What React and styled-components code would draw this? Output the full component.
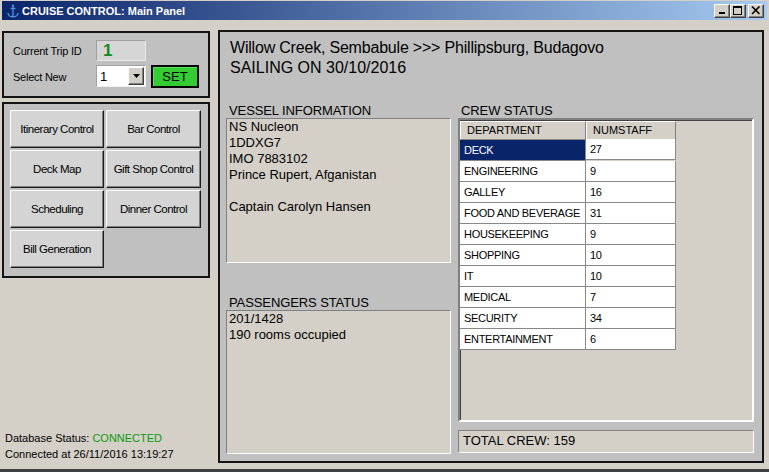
import styled, { createGlobalStyle } from 'styled-components';

const GlobalStyle = createGlobalStyle`
  html, body {
    margin: 0;
    padding: 0;
    background: #d4d0c8;
  }
  body {
    font-family: "Liberation Sans", Arial, sans-serif;
    color: #000;
  }
  * {
    box-sizing: border-box;
  }
`;

const crew = [
  ['DECK', 27],
  ['ENGINEERING', 9],
  ['GALLEY', 16],
  ['FOOD AND BEVERAGE', 31],
  ['HOUSEKEEPING', 9],
  ['SHOPPING', 10],
  ['IT', 10],
  ['MEDICAL', 7],
  ['SECURITY', 34],
  ['ENTERTAINMENT', 6],
];

const menu = [
  'Itinerary Control',
  'Bar Control',
  'Deck Map',
  'Gift Shop Control',
  'Scheduling',
  'Dinner Control',
  'Bill Generation',
];

const Anchor = () => (
  <svg width='12' height='14' viewBox='0 0 12 14'>
    <g stroke='#4f8fd8' strokeWidth='1.4' fill='none'>
      <line x1='6' y1='2' x2='6' y2='13' />
      <line x1='3.5' y1='4.5' x2='8.5' y2='4.5' />
      <path d='M1 9 Q1.5 12.8 6 12.8 Q10.5 12.8 11 9' />
    </g>
    <circle cx='6' cy='1.6' r='1.2' fill='#4f8fd8' />
  </svg>
);

const App = () => {
  return (
    <Window>
      <GlobalStyle />
      <TitleBar>
        <TitleIcon>
          <Anchor />
        </TitleIcon>
        <TitleText>CRUISE CONTROL: Main Panel</TitleText>
        <TitleButtons>
          <TitleButton aria-label='minimize'>
            <svg width='10' height='9' viewBox='0 0 10 9'>
              <rect x='2' y='6' width='6' height='2' fill='#000' />
            </svg>
          </TitleButton>
          <TitleButton aria-label='maximize'>
            <svg width='10' height='9' viewBox='0 0 10 9'>
              <rect x='0.5' y='0.5' width='8' height='8' fill='none' stroke='#000' />
              <rect x='0' y='0' width='9' height='2' fill='#000' />
            </svg>
          </TitleButton>
          <TitleButton aria-label='close' $gap={2}>
            <svg width='10' height='9' viewBox='0 0 10 9'>
              <path d='M1 0.5 L8.5 8 M8.5 0.5 L1 8' stroke='#000' strokeWidth='1.6' />
            </svg>
          </TitleButton>
        </TitleButtons>
      </TitleBar>

      <Body>
        <LeftColumn>
          <TripPanel>
            <FieldLabel>Current Trip ID</FieldLabel>
            <TripId>1</TripId>
            <span />
            <FieldLabel>Select New</FieldLabel>
            <Combo>
              <ComboValue>1</ComboValue>
              <ComboArrow>
                <svg width='7' height='4' viewBox='0 0 7 4'>
                  <path d='M0 0 H7 L3.5 4 Z' fill='#000' />
                </svg>
              </ComboArrow>
            </Combo>
            <SetButton>SET</SetButton>
          </TripPanel>

          <MenuPanel>
            {menu.map((item) => (
              <MenuButton key={item}>{item}</MenuButton>
            ))}
          </MenuPanel>

          <StatusBlock>
            <div>
              Database Status:<Connected>CONNECTED</Connected>
            </div>
            <div>Connected at 26/11/2016 13:19:27</div>
          </StatusBlock>
        </LeftColumn>

        <MainPanel>
          <Heading>
            <Route>Willow Creek, Sembabule &gt;&gt;&gt; Phillipsburg, Budagovo</Route>
            <div>SAILING ON 30/10/2016</div>
          </Heading>
          <Columns>
            <Column>
              <SectionLabel>VESSEL INFORMATION</SectionLabel>
              <InfoBox>
                <div>NS Nucleon</div>
                <div>1DDXG7</div>
                <div>IMO 7883102</div>
                <div>Prince Rupert, Afganistan</div>
                <div>&nbsp;</div>
                <div>Captain Carolyn Hansen</div>
              </InfoBox>
              <SectionLabel $space={32}>PASSENGERS STATUS</SectionLabel>
              <InfoBox>
                <div>201/1428</div>
                <div>190 rooms occupied</div>
              </InfoBox>
            </Column>
            <Column>
              <SectionLabel>CREW STATUS</SectionLabel>
              <GridBox>
                <GridRow>
                  <HeaderCell>DEPARTMENT</HeaderCell>
                  <HeaderCell>NUMSTAFF</HeaderCell>
                </GridRow>
                {crew.map(([dept, num], i) => (
                  <GridRow key={dept}>
                    <Cell $selected={i === 0}>{dept}</Cell>
                    <Cell>{num}</Cell>
                  </GridRow>
                ))}
              </GridBox>
              <TotalBox>TOTAL CREW: 159</TotalBox>
            </Column>
          </Columns>
        </MainPanel>
      </Body>
    </Window>
  );
};

const Window = styled.div`
  width: 769px;
  height: 472px;
  background: #d4d0c8;
  padding: 1px 2px 0 2px;
  display: flex;
  flex-direction: column;
  overflow: hidden;
  border-bottom: 3px solid;
  border-image: linear-gradient(#d4d0c8 33%, #808080 33%, #808080 66%, #404040 66%) 3;
`;

const TitleBar = styled.div`
  height: 19px;
  display: flex;
  align-items: center;
  padding: 0 3px 0 5px;
  background: linear-gradient(to right, #0a246a, #a6caf0);
  flex-shrink: 0;
`;

const TitleIcon = styled.div`
  width: 15px;
  display: flex;
  align-items: center;
  margin-top: 1px;
`;

const TitleText = styled.div`
  color: #fff;
  font-weight: bold;
  font-size: 11px;
  flex: 1;
`;

const TitleButtons = styled.div`
  display: flex;
  align-items: center;
`;

const TitleButton = styled.button`
  width: 16px;
  height: 14px;
  padding: 0;
  margin: 0 0 0 ${(p) => p.$gap || 0}px;
  background: #d4d0c8;
  border: 1px solid;
  border-color: #fff #404040 #404040 #fff;
  box-shadow: inset -1px -1px #808080;
  display: flex;
  align-items: center;
  justify-content: center;
`;

const Body = styled.div`
  display: flex;
  align-items: flex-start;
  padding-top: 10px;
`;

const LeftColumn = styled.div`
  width: 208px;
  height: 433px;
  display: flex;
  flex-direction: column;
  padding-bottom: 1px;
`;

const Panel = styled.div`
  background: #c0c0c0;
  border: 2px solid #141414;
`;

const TripPanel = styled(Panel)`
  margin-top: 1px;
  height: 67px;
  padding: 7px 8px 0 9px;
  display: grid;
  grid-template-columns: 78px 50px 48px;
  grid-template-rows: 21px 23px;
  column-gap: 5px;
  row-gap: 4px;
  align-items: center;
`;

const FieldLabel = styled.div`
  font-size: 11px;
  letter-spacing: -0.25px;
  white-space: nowrap;
`;

const TripId = styled.div`
  height: 21px;
  background: #d6d6d6;
  border: 1px solid;
  border-color: #a0a0a0 #e8e8e8 #e8e8e8 #a0a0a0;
  color: #138a1c;
  font-size: 17px;
  font-weight: bold;
  line-height: 19px;
  padding-left: 6px;
`;

const Combo = styled.div`
  height: 22px;
  align-self: start;
  background: #fff;
  border: 1px solid;
  border-color: #a0a0a0 #f0f0f0 #f0f0f0 #a0a0a0;
  display: flex;
  align-items: center;
  padding: 1px;
`;

const ComboValue = styled.div`
  flex: 1;
  font-size: 13px;
  padding-left: 2px;
`;

const ComboArrow = styled.div`
  width: 16px;
  height: 18px;
  background: #d4d0c8;
  border: 1px solid;
  border-color: #fff #404040 #404040 #fff;
  box-shadow: inset -1px -1px #808080;
  display: flex;
  align-items: center;
  justify-content: center;
`;

const SetButton = styled.button`
  height: 23px;
  padding: 0;
  background: #33cc33;
  border: 2px solid #000;
  box-shadow: inset 1px 1px #5fe05f;
  font-family: "Liberation Sans", Arial, sans-serif;
  font-size: 13px;
  color: #000;
`;

const MenuPanel = styled(Panel)`
  margin-top: 4px;
  height: 176px;
  padding: 6px;
  display: grid;
  grid-template-columns: 94px 95px;
  grid-auto-rows: 38px;
  column-gap: 2px;
  row-gap: 2px;
  align-content: start;
`;

const MenuButton = styled.button`
  background: #d4d4d4;
  border: 1px solid;
  border-color: #fff #1a1a1a #1a1a1a #fff;
  box-shadow: inset -1px -1px #808080;
  font-family: "Liberation Sans", Arial, sans-serif;
  font-size: 11.5px;
  letter-spacing: -0.5px;
  color: #000;
  padding: 0;
`;

const StatusBlock = styled.div`
  margin-top: auto;
  padding-left: 3px;
  font-size: 11px;
  line-height: 16px;
  white-space: nowrap;
`;

const Connected = styled.span`
  color: #0a9a0a;
  margin-left: 3px;
`;

const MainPanel = styled(Panel)`
  margin-left: 8px;
  width: 546px;
  height: 433px;
  padding: 6px 8px 7px 6px;
  display: flex;
  flex-direction: column;
`;

const Heading = styled.div`
  font-size: 16px;
  line-height: 20px;
  padding-left: 4px;
  margin-bottom: 25px;
`;

const Route = styled.div`
  letter-spacing: -0.2px;
`;

const Columns = styled.div`
  flex: 1;
  display: grid;
  grid-template-columns: 225px 296px;
  column-gap: 7px;
`;

const Column = styled.div`
  display: flex;
  flex-direction: column;
`;

const SectionLabel = styled.div`
  font-size: 13px;
  line-height: 15px;
  height: 15px;
  padding-left: 3px;
  margin-top: ${(p) => p.$space || 0}px;
  letter-spacing: -0.1px;
`;

const InfoBox = styled.div`
  flex: 1;
  background: #d4d0c8;
  border: 1px solid;
  border-color: #808080 #fff #fff #808080;
  font-size: 13px;
  line-height: 16px;
  padding-left: 2px;
`;

const GridBox = styled.div`
  flex: 1;
  background: #d4d0c8;
  border: 2px solid;
  border-color: #808080 #fff #fff #808080;
  box-shadow: inset 1px 1px #404040;
`;

const GridRow = styled.div`
  display: grid;
  grid-template-columns: 126px 90px;
`;

const HeaderCell = styled.div`
  height: 18px;
  font-size: 11px;
  line-height: 17px;
  padding-left: 6px;
  background: #d4d0c8;
  border-top: 1px solid #fff;
  border-left: 1px solid #fff;
  border-right: 1px solid #808080;
  margin-top: 1px;
`;

const Cell = styled.div`
  font-size: 11px;
  line-height: 20px;
  padding-left: 4px;
  letter-spacing: -0.3px;
  white-space: nowrap;
  overflow: hidden;
  background: ${(p) => (p.$selected ? '#0a246a' : '#fff')};
  color: ${(p) => (p.$selected ? '#fff' : '#000')};
  border-right: 1px solid #888;
  border-bottom: 1px solid #888;
  border-top: ${(p) => (p.$selected ? '1px solid #888' : 'none')};
  height: ${(p) => (p.$selected ? 22 : 21)}px;
`;

const TotalBox = styled.div`
  height: 23px;
  margin-top: 8px;
  margin-bottom: 1px;
  background: #d4d0c8;
  border: 1px solid;
  border-color: #808080 #fff #fff #808080;
  font-size: 13px;
  line-height: 20px;
  padding-left: 4px;
`;

export default App;
